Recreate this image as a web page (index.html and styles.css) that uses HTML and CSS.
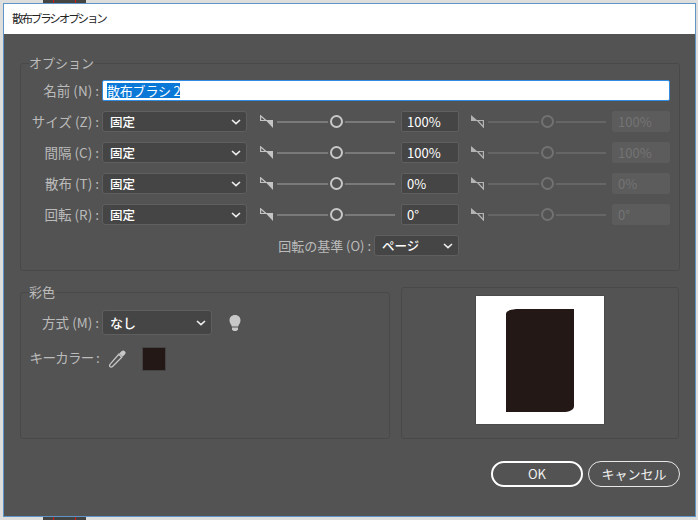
FILE: index.html
```html
<!DOCTYPE html>
<html lang="ja">
  <head>
    <meta charset="UTF-8" />
    <meta name="viewport" content="width=device-width, initial-scale=1.0" />
    <title>散布ブラシオプション</title>
    <link rel="stylesheet" href="styles.css">
  </head>
  <body>
    <svg class="defs" width="0" height="0" aria-hidden="true">
      <symbol id="chevron" viewBox="0 0 10 6">
        <path d="M1 1l4 3.600L9 1" fill="none" stroke="currentColor" stroke-width="1.600" />
      </symbol>
      <symbol id="wedge" viewBox="0 0 13 13">
        <path d="M.6.8V5.500H6Z" fill="none" stroke="currentColor" stroke-width="1.200" />
        <path d="M5.500 5H13V13Z" fill="currentColor" />
      </symbol>
      <symbol id="wedge-off" viewBox="0 0 13 13">
        <path d="M0 0V6H7Z" fill="currentColor" />
        <path d="M6.500 5.500H12.400V12Z" fill="none" stroke="currentColor" stroke-width="1.200" />
      </symbol>
    </svg>

    <div class="strip"><i></i><i></i></div>

    <div class="window">
      <div class="titlebar">散布ブラシオプション</div>
      <div class="dialog">
        <fieldset class="group">
          <legend>オプション</legend>
          <div class="rows">
            <div class="row">
              <label class="label">名前 (N) :</label>
              <div class="name-input"><span class="selected">散布ブラシ 2</span></div>
            </div>

            <div class="row">
              <label class="label">サイズ (Z) :</label>
              <div class="select"><span>固定</span><svg class="chevron"><use href="#chevron" /></svg></div>
              <svg class="wedge"><use href="#wedge" /></svg>
              <div class="slider"><div class="knob"></div></div>
              <div class="field">100%</div>
              <svg class="wedge off"><use href="#wedge-off" /></svg>
              <div class="slider off"><div class="knob"></div></div>
              <div class="field off">100%</div>
            </div>

            <div class="row">
              <label class="label">間隔 (C) :</label>
              <div class="select"><span>固定</span><svg class="chevron"><use href="#chevron" /></svg></div>
              <svg class="wedge"><use href="#wedge" /></svg>
              <div class="slider"><div class="knob"></div></div>
              <div class="field">100%</div>
              <svg class="wedge off"><use href="#wedge-off" /></svg>
              <div class="slider off"><div class="knob"></div></div>
              <div class="field off">100%</div>
            </div>

            <div class="row">
              <label class="label">散布 (T) :</label>
              <div class="select"><span>固定</span><svg class="chevron"><use href="#chevron" /></svg></div>
              <svg class="wedge"><use href="#wedge" /></svg>
              <div class="slider"><div class="knob"></div></div>
              <div class="field">0%</div>
              <svg class="wedge off"><use href="#wedge-off" /></svg>
              <div class="slider off"><div class="knob"></div></div>
              <div class="field off">0%</div>
            </div>

            <div class="row">
              <label class="label">回転 (R) :</label>
              <div class="select"><span>固定</span><svg class="chevron"><use href="#chevron" /></svg></div>
              <svg class="wedge"><use href="#wedge" /></svg>
              <div class="slider"><div class="knob"></div></div>
              <div class="field">0°</div>
              <svg class="wedge off"><use href="#wedge-off" /></svg>
              <div class="slider off"><div class="knob"></div></div>
              <div class="field off">0°</div>
            </div>

            <div class="row base-row">
              <label class="label">回転の基準 (O) :</label>
              <div class="select base-select"><span>ページ</span><svg class="chevron"><use href="#chevron" /></svg></div>
            </div>
          </div>
        </fieldset>

        <div class="lower">
          <fieldset class="group color-group">
            <legend>彩色</legend>
            <div class="row method-row">
              <label class="label">方式 (M) :</label>
              <div class="select method-select"><span>なし</span><svg class="chevron"><use href="#chevron" /></svg></div>
              <svg class="bulb" viewBox="0 0 12 16">
                <path d="M6 0C2.600 0 .5 2.400 .5 5.400c0 2.500 1.800 3.800 2.300 6.100h6.400C9.700 9.200 11.500 7.900 11.500 5.400 11.500 2.400 9.400 0 6 0Z" />
                <path d="M3 12.500h6V14.500L7.500 16h-3L3 14.500Z" />
              </svg>
            </div>
            <div class="row key-row">
              <label class="label">キーカラー :</label>
              <svg class="dropper" viewBox="0 0 18 18">
                <path d="M13.500 1.200a2.300 2.300 0 0 1 3.300 3.300l-2.300 2.300-3.300-3.300Z" fill="currentColor" />
                <path d="M10.800 4.200l3 3-8.800 8.800c-1 1-2.300 1.300-3 .6s-.4-2 .6-3Z" fill="none" stroke="currentColor" stroke-width="1.300" />
              </svg>
              <div class="swatch"></div>
            </div>
          </fieldset>

          <div class="preview-panel">
            <div class="preview">
              <svg class="brush" viewBox="0 0 68 103">
                <path d="M0 5C0 2 3 1 10 0H68V97C68 101 63 103 57 103H0Z" />
              </svg>
            </div>
          </div>
        </div>

        <div class="actions">
          <button class="btn primary">OK</button>
          <button class="btn">キャンセル</button>
        </div>
      </div>
    </div>

    <div class="strip"><i></i><i></i></div>
  </body>
</html>
```

FILE: styles.css
```css
* {
  padding: 0;
  margin: 0;
  box-sizing: border-box;
}
html,
body {
  height: 520px;
  overflow: hidden;
}
body {
  display: flex;
  flex-direction: column;
  background: #dedede;
  font-family: "Noto Sans CJK JP", "Noto Sans", sans-serif;
  font-size: 12px;
  color: #bbb;
}
.defs {
  display: none;
}
.strip {
  flex: 0 0 3px;
  width: 43px;
  margin-left: 43px;
  background: #444;
  display: flex;
  justify-content: space-around;
}
.strip i {
  width: 1px;
  background: #d01818;
}
.window {
  flex: 0 0 514px;
  margin: 0 2px 0 3px;
  border: 1px solid #5f95c4;
  display: flex;
  flex-direction: column;
}
.titlebar {
  flex: 0 0 30px;
  padding-left: 8px;
  background: #fff;
  color: #222;
  font-size: 11.500px;
  line-height: 29px;
  letter-spacing: -2.100px;
}
.dialog {
  flex: 1;
  background: #535353;
  padding: 21px 15px 0 16px;
}
.group {
  border: 1px solid #494949;
  border-radius: 3px;
  padding: 0 8px;
  min-width: 0;
}
.group legend {
  height: 16px;
  line-height: 16px;
  font-size: 13px;
  color: #bbb;
}
.rows {
  padding-top: 9px;
  padding-bottom: 14px;
  display: flex;
  flex-direction: column;
  gap: 10px;
}
.row {
  display: flex;
  align-items: center;
  height: 21px;
}
.label {
  flex: 0 0 70px;
  text-align: right;
  white-space: nowrap;
  font-size: 13.500px;
  line-height: 21px;
  margin-right: 3px;
}
.name-input {
  flex: 0 0 568px;
  height: 21px;
  background: #fff;
  border: 1px solid #2f8ce0;
  border-radius: 2px;
  padding-left: 4px;
  display: flex;
  align-items: center;
}
.selected {
  background: #0a78d7;
  color: #fff;
  font-size: 13px;
  line-height: 15px;
  height: 15px;
  letter-spacing: -.2px;
}
.select {
  flex: 0 0 145px;
  height: 21px;
  display: flex;
  align-items: center;
  justify-content: space-between;
  padding: 0 5px 0 7px;
  background: #454545;
  border: 1px solid #5f5f5f;
  border-radius: 3px;
  color: #fff;
  font-size: 12.500px;
  font-weight: 500;
}
.chevron {
  width: 10px;
  height: 6px;
  color: #eee;
}
.wedge {
  flex: 0 0 13px;
  width: 13px;
  height: 13px;
  margin-left: 13px;
  color: #c4c4c4;
}
.wedge.off {
  margin-left: 12px;
  color: #b4b4b4;
}
.slider {
  flex: 0 0 118px;
  height: 2px;
  margin: 0 6px 0 4px;
  background: #7a7a7a;
  display: flex;
  justify-content: center;
  align-items: center;
}
.slider.off {
  background: #666;
}
.knob {
  width: 13px;
  height: 13px;
  border: 2.500px solid #c8c8c8;
  border-radius: 50%;
  background: #535353;
  box-shadow: 0 0 0 2px #535353;
}
.slider.off .knob {
  border-color: #727272;
}
.field {
  flex: 0 0 58px;
  height: 21px;
  line-height: 19px;
  padding-left: 5px;
  background: #454545;
  border: 1px solid #5f5f5f;
  border-radius: 2px;
  color: #fff;
  font-size: 13px;
}
.field.off {
  background: #5c5c5c;
  border-color: #5c5c5c;
  color: #747474;
}
.base-row {
  justify-content: flex-end;
  padding-right: 212px;
}
.base-row .label {
  flex: none;
  font-size: 13px;
}
.base-select {
  flex: 0 0 85px;
}
.lower {
  display: flex;
  align-items: flex-end;
  gap: 11px;
  margin-top: 13px;
}
.color-group {
  flex: 0 0 370px;
  height: 155px;
}
.method-row {
  height: 25px;
  margin-top: 10px;
}
.method-select {
  flex: 0 0 110px;
  height: 25px;
  font-size: 13px;
}
.bulb {
  width: 12px;
  height: 16px;
  margin-left: 17px;
  fill: #c8c8c8;
}
.key-row {
  height: 24px;
  margin-top: 12px;
  align-items: flex-start;
}
.key-row .label {
  letter-spacing: -.7px;
  line-height: 20px;
}
.dropper {
  width: 18px;
  height: 18px;
  margin: 3px 0 0 6px;
  color: #c8c8c8;
}
.swatch {
  width: 24px;
  height: 24px;
  margin-left: 16px;
  background: #231815;
  border: 1px solid #444;
}
.preview-panel {
  flex: 0 0 278px;
  height: 152px;
  border: 1px solid #494949;
  border-radius: 3px;
  display: flex;
  justify-content: center;
  padding-top: 8px;
}
.preview {
  width: 128px;
  height: 128px;
  background: #fff;
  padding: 13px 0 0 30px;
  box-shadow: 0 0 1px #222;
}
.brush {
  display: block;
  width: 68px;
  height: 103px;
  fill: #231815;
}
.actions {
  display: flex;
  justify-content: flex-end;
  gap: 5px;
  margin-top: 22px;
}
.btn {
  width: 92px;
  height: 26px;
  padding-bottom: 2px;
  border: 1px solid #e8e8e8;
  border-radius: 13px;
  background: transparent;
  color: #f0f0f0;
  font-family: inherit;
  font-size: 13px;
}
.primary {
  border: 2px solid #fff;
}
```
